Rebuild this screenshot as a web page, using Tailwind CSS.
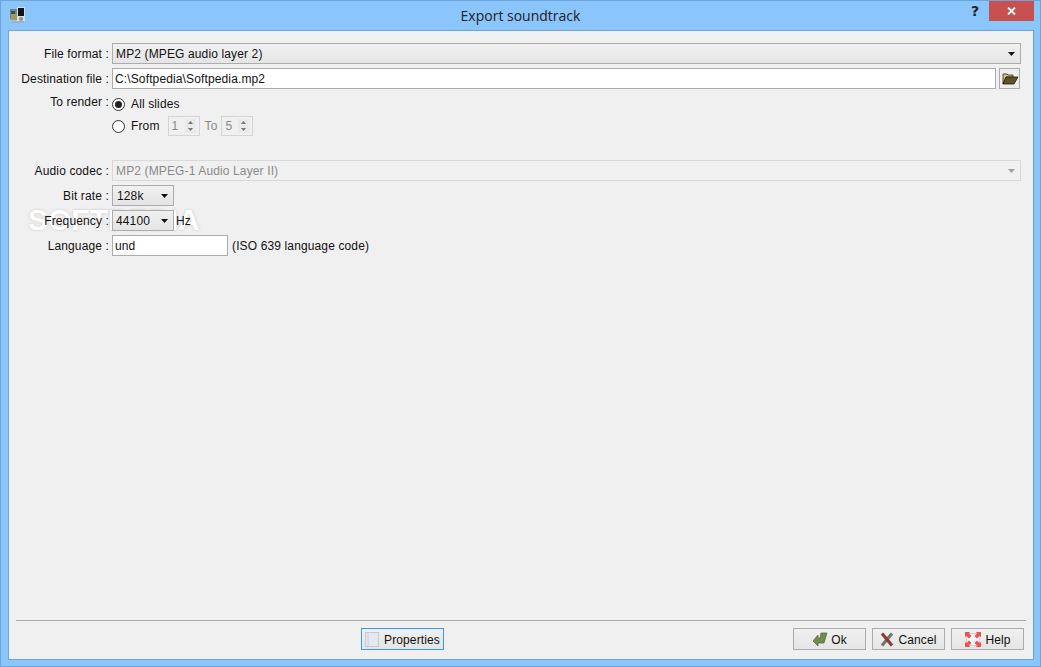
<!DOCTYPE html>
<html lang="en">
<head>
    <meta charset="UTF-8">
    <script src="https://cdn.jsdelivr.net/npm/@tailwindcss/browser@4"></script>
    <title>Export soundtrack</title>
</head>
<body class="m-0 overflow-hidden bg-[#8ac5fb]">
    <div class="w-[1041px] h-[667px] flex flex-col bg-[#8ac5fb] border border-[#6ea5d8] font-['Liberation_Sans',Arial,sans-serif] text-[12px] tracking-[0.13px] text-[#111]">

        <!-- title bar -->
        <div class="relative h-[29px] shrink-0 flex justify-center">
            <svg class="absolute left-[9px] top-[5px]" width="17" height="17" viewBox="0 0 17 17">
                <rect x="0" y="3" width="8" height="10" fill="#6d8a8c"/>
                <rect x="1" y="8" width="6" height="6" fill="#a39a55"/>
                <rect x="1" y="5" width="4" height="3" fill="#35505c"/>
                <rect x="7" y="1" width="8" height="14" fill="#d8dde2"/>
                <rect x="8" y="2" width="6" height="8" fill="#10141f"/>
                <circle cx="11" cy="13" r="2" fill="#8a9097"/>
                <rect x="2" y="15" width="12" height="2" fill="#a9afb6"/>
            </svg>
            <span class="mt-[5px] text-[14px] tracking-normal leading-[20px] text-[#222] font-['Open_Sans',sans-serif]">Export soundtrack</span>
            <span class="absolute left-[970px] top-[1px] text-[14px] leading-[18px] font-bold text-[#222] font-['DejaVu_Sans',sans-serif]">?</span>
            <div class="absolute left-[988px] top-0 w-[45px] h-[20px] bg-[#c75050] flex items-center justify-center">
                <svg width="9" height="8" viewBox="0 0 9 8"><path d="M1 0.5 L8 7.5 M8 0.5 L1 7.5" stroke="#fff" stroke-width="1.8"/></svg>
            </div>
        </div>

        <!-- dialog panel -->
        <div class="relative isolate ml-[7px] mr-[6px] h-[630px] bg-[#f0f0f0] border border-[#6ea5d8] flex flex-col pt-[12px]">

            <!-- softpedia watermark, sits behind the form -->
            <span class="absolute -z-10 left-[19px] top-[172px] text-[30px] tracking-normal leading-[34px] font-bold text-white [text-shadow:0_0_3px_#c4c4c4]">SOFTPEDIA</span>

            <div class="flex items-center h-[21px] mb-[4px]">
                <div class="w-[100px] text-right whitespace-nowrap">File format :</div>
                <div class="ml-[3px] w-[909px] h-[21px] flex items-center justify-between border border-[#acacac] bg-linear-to-b from-[#f0f0f0] to-[#e5e5e5] pl-[3px] pr-[5px]">
                    <span>MP2 (MPEG audio layer 2)</span>
                    <svg width="7" height="4" viewBox="0 0 7 4"><path d="M0 0 H7 L3.5 4 Z" fill="#111"/></svg>
                </div>
            </div>

            <div class="flex items-center h-[21px] mb-[4px]">
                <div class="w-[100px] text-right whitespace-nowrap pt-[1px]">Destination file :</div>
                <div class="ml-[3px] w-[884px] h-[21px] flex items-center border border-[#acacac] bg-white pl-[2px]">C:\Softpedia\Softpedia.mp2</div>
                <div class="ml-[3px] w-[21px] h-[21px] flex items-center justify-center border border-[#acacac] bg-[#efefef]">
                    <svg width="16" height="12" viewBox="0 0 16 12">
                        <path d="M1 1 H5 L6 2 H11 V4 H4 L1 11 Z" fill="#cfc98a" stroke="#2e2a10" stroke-width="0.8"/>
                        <path d="M1 11 L4 4 H16 L12 11 Z" fill="#5d5527" stroke="#1d1a08" stroke-width="0.8"/>
                    </svg>
                </div>
            </div>

            <div class="flex h-[22px]">
                <div class="w-[100px] text-right whitespace-nowrap leading-[16px] mt-[1px]">To render :</div>
                <div class="ml-[3px] flex items-center">
                    <div class="w-[13px] h-[13px] rounded-full border border-[#333] bg-white flex items-center justify-center">
                        <div class="w-[7px] h-[7px] rounded-full bg-[#222]"></div>
                    </div>
                    <span class="ml-[6px]">All slides</span>
                </div>
            </div>

            <div class="flex items-center h-[22px] ml-[103px]">
                <div class="w-[13px] h-[13px] rounded-full border border-[#333] bg-white"></div>
                <span class="ml-[6px]">From</span>
                <div class="ml-[8px] w-[32px] h-[20px] flex items-center justify-between border border-[#d4d4d4] pl-[3px] pr-[3px] text-[#8a8a8a]">
                    <span>1</span>
                    <svg width="11" height="14" viewBox="0 0 11 14"><rect width="11" height="14" fill="#e9e9e9"/><path d="M3 5 H8 L5.5 2 Z M3 9 H8 L5.5 12 Z" fill="#777"/></svg>
                </div>
                <span class="ml-[5px] text-[#8a8a8a]">To</span>
                <div class="ml-[4px] w-[32px] h-[20px] flex items-center justify-between border border-[#d4d4d4] pl-[3px] pr-[3px] text-[#8a8a8a]">
                    <span>5</span>
                    <svg width="11" height="14" viewBox="0 0 11 14"><rect width="11" height="14" fill="#e9e9e9"/><path d="M3 5 H8 L5.5 2 Z M3 9 H8 L5.5 12 Z" fill="#777"/></svg>
                </div>
            </div>

            <div class="h-[23px]"></div>

            <div class="flex items-center h-[21px] mb-[4px]">
                <div class="w-[100px] text-right whitespace-nowrap">Audio codec :</div>
                <div class="ml-[3px] w-[909px] h-[21px] flex items-center justify-between border border-[#d9d9d9] pl-[3px] pr-[5px] text-[#8a8a8a]">
                    <span>MP2 (MPEG-1 Audio Layer II)</span>
                    <svg width="7" height="4" viewBox="0 0 7 4"><path d="M0 0 H7 L3.5 4 Z" fill="#a0a0a0"/></svg>
                </div>
            </div>

            <div class="flex items-center h-[21px] mb-[4px]">
                <div class="w-[100px] text-right whitespace-nowrap">Bit rate :</div>
                <div class="ml-[3px] w-[62px] h-[21px] flex items-center justify-between border border-[#acacac] bg-linear-to-b from-[#f0f0f0] to-[#e5e5e5] pl-[4px] pr-[5px]">
                    <span>128k</span>
                    <svg width="7" height="4" viewBox="0 0 7 4"><path d="M0 0 H7 L3.5 4 Z" fill="#111"/></svg>
                </div>
            </div>

            <div class="flex items-center h-[21px] mb-[4px]">
                <div class="w-[100px] text-right whitespace-nowrap">Frequency :</div>
                <div class="ml-[3px] w-[62px] h-[21px] flex items-center justify-between border border-[#acacac] bg-linear-to-b from-[#f0f0f0] to-[#e5e5e5] pl-[3px] pr-[5px]">
                    <span>44100</span>
                    <svg width="7" height="4" viewBox="0 0 7 4"><path d="M0 0 H7 L3.5 4 Z" fill="#111"/></svg>
                </div>
                <span class="ml-[2px]">Hz</span>
            </div>

            <div class="flex items-center h-[21px]">
                <div class="w-[100px] text-right whitespace-nowrap">Language :</div>
                <div class="ml-[3px] w-[116px] h-[21px] flex items-center border border-[#acacac] bg-white pl-[2px]">und</div>
                <span class="ml-[4px]">(ISO 639 language code)</span>
            </div>

            <!-- footer -->
            <div class="mt-auto mx-[7px] border-t border-[#a9a9a9] h-[39px] relative">
                <div class="absolute left-[345px] top-[7px] w-[83px] h-[22px] flex items-center border border-[#3399ff] bg-linear-to-b from-[#f0f0f0] to-[#e5e5e5] pl-[3px]">
                    <svg width="14" height="15" viewBox="0 0 14 15">
                        <rect x="0.5" y="0.5" width="13" height="14" fill="#e3e9f2" stroke="#c8c8c8"/>
                        <path d="M3 1 V14" stroke="#e8c4c4"/>
                    </svg>
                    <span class="ml-[5px] pt-[1px]">Properties</span>
                </div>
                <div class="absolute left-[777px] top-[7px] w-[73px] h-[22px] flex items-center justify-center border border-[#acacac] bg-linear-to-b from-[#f0f0f0] to-[#e5e5e5]">
                    <svg width="16" height="15" viewBox="0 0 16 15">
                        <path d="M15 1 L9 1 L8 6 L6 6 L6 3 L1 9 L6 14 L6 11 L12 11 Z" fill="#6f8d50" stroke="#4c6536" stroke-width="0.7"/>
                    </svg>
                    <span class="ml-[3px] pt-[1px]">Ok</span>
                </div>
                <div class="absolute left-[856px] top-[7px] w-[73px] h-[22px] flex items-center justify-center border border-[#acacac] bg-linear-to-b from-[#f0f0f0] to-[#e5e5e5]">
                    <svg width="14" height="15" viewBox="0 0 14 15">
                        <path d="M12 1.5 L2 13.5" stroke="#77766a" stroke-width="3.2"/>
                        <path d="M2 1.5 L12 13.5" stroke="#8a3a3f" stroke-width="3.2"/>
                    </svg>
                    <span class="ml-[4px] pt-[1px]">Cancel</span>
                </div>
                <div class="absolute left-[935px] top-[7px] w-[73px] h-[22px] flex items-center justify-center border border-[#acacac] bg-linear-to-b from-[#f0f0f0] to-[#e5e5e5]">
                    <svg width="18" height="17" viewBox="0 0 18 17">
                        <rect x="2.5" y="2.5" width="13" height="12" fill="#f6f6f6" stroke="#d0d0d0"/>
                        <path d="M1 1 H6 L5 2.5 L7.5 5 L5 7.5 L2.5 5 L1 6 Z M17 1 V6 L15.5 5 L13 7.5 L10.5 5 L13 2.5 L12 1 Z M1 16 V11 L2.5 12 L5 9.5 L7.5 12 L5 14.5 L6 16 Z M17 16 H12 L13 14.5 L10.5 12 L13 9.5 L15.5 12 L17 11 Z" fill="#ee5257"/>
                    </svg>
                    <span class="ml-[3px] pt-[1px]">Help</span>
                </div>
            </div>
        </div>
    </div>
</body>
</html>
